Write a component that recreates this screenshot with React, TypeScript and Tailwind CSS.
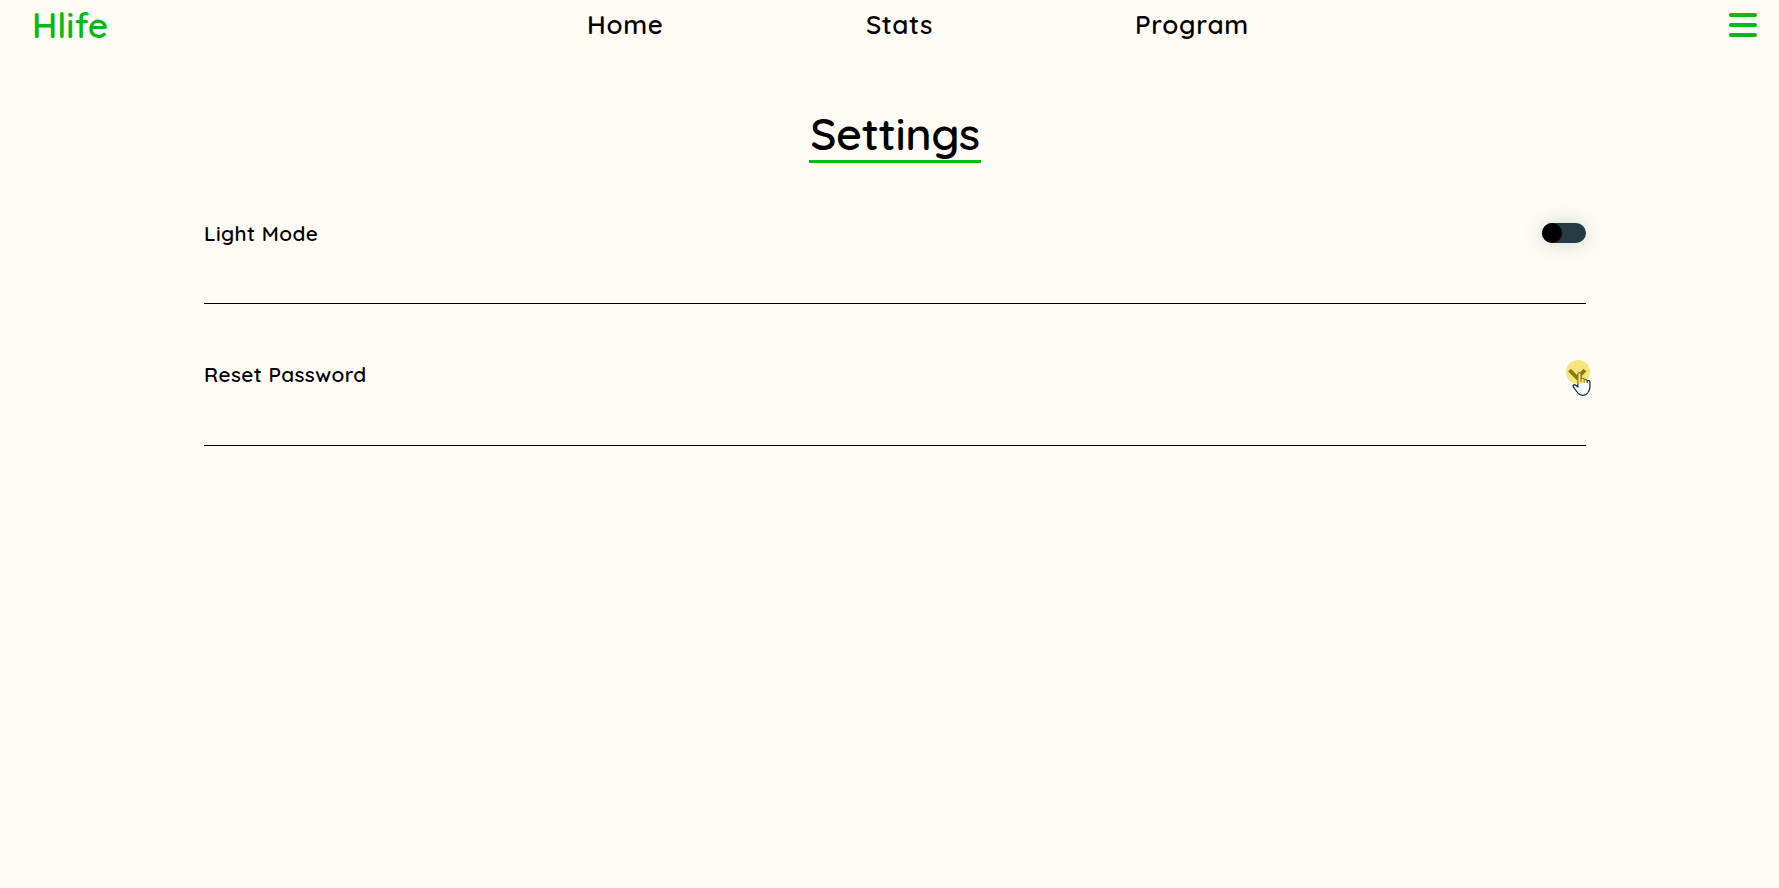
import type { ReactNode } from "react";

const links = [
  { label: "Home", cls: "w-[279px] tracking-[0.7px]" },
  { label: "Stats", cls: "w-[269px] tracking-[0.5px]" },
  { label: "Program", cls: "w-[130px] tracking-[0.7px]" },
];

function Header() {
  return (
    <header className="flex h-[50px] items-start">
      <a className="w-[554px] shrink-0 pl-8 text-[35.2px] leading-[51px] font-semibold text-[#04b911]">Hlife</a>
      <nav className="flex flex-1 pl-[33px] text-[26px] leading-[50px] font-semibold">
        {links.map((l) => (
          <a key={l.label} className={l.cls}>
            {l.label}
          </a>
        ))}
      </nav>
      <button aria-label="Menu" className="mt-[13px] mr-[22px] flex w-7 flex-col gap-[6px]">
        <span className="h-1 rounded-full bg-[#04b911]" />
        <span className="h-1 rounded-full bg-[#04b911]" />
        <span className="h-1 rounded-full bg-[#04b911]" />
      </button>
    </header>
  );
}

function Row({ label, children }: { label: string; children: ReactNode }) {
  return (
    <section className="flex items-start justify-between border-b border-black">
      <h2 className="text-[20.8px] leading-[26px] font-semibold tracking-[0.4px]">{label}</h2>
      {children}
    </section>
  );
}

function Toggle() {
  return (
    <button aria-label="Light Mode" className="mt-[3px] mb-[60px] flex h-5 w-11 rounded-full bg-[#263b44] shadow-[0_0_20px_rgba(38,100,110,0.25)]">
      <span className="size-5 rounded-full bg-black" />
    </button>
  );
}

function Expand() {
  return (
    <button aria-label="Expand" className="mt-[-1px] mr-[-8px] mb-[47px] h-[38px] w-8">
      <svg className="block" width="32" height="38" viewBox="0 0 32 38" fill="none">
        <path d="M7.5 10.2 L15.2 17.9 L22.9 10.2" stroke="#201a10" strokeWidth="3.8" />
        <path
          d="M15.9 27 V14 C15.9 12.1 19 12.1 19 14 V18.8 C19.7 17.8 22 18 22.2 19.8 C23.2 18.9 25 19.3 25.2 20.9 C26.3 20.1 27.9 20.6 27.9 22.2 V27.6 C27.9 30 26.3 31.8 25.7 33 C23.7 36.2 18.4 36 16 33.1 L11.6 27.4 C9.9 25.2 12.4 24 13.8 25.2 Z"
          fill="#ffffff"
          stroke="#132a3a"
          strokeWidth="1.2"
          strokeLinejoin="round"
        />
        <path d="M22.2 19.8 V22.6 M25.2 20.9 V23.2 M19 18.8 V22.4" stroke="#132a3a" strokeWidth="1" />
        <circle cx="16" cy="12" r="12" fill="#ebd00b" fillOpacity="0.52" />
      </svg>
    </button>
  );
}

export default function App() {
  return (
    <div className="min-h-screen overflow-hidden bg-[#fffcf5] font-['Quicksand','Lato',sans-serif] text-black">
      <Header />
      <main className="ml-[204px] w-[1382px]">
        <div className="flex justify-center pt-[57px]">
          <h1 className="h-14 w-[172px] border-b-[3px] border-[#04b911] text-center text-[44.8px] leading-[52px] font-semibold tracking-[-0.4px]">Settings</h1>
        </div>
        <div className="pt-[57px]">
          <Row label="Light Mode">
            <Toggle />
          </Row>
        </div>
        <div className="pt-[57px]">
          <Row label="Reset Password">
            <Expand />
          </Row>
        </div>
      </main>
    </div>
  );
}
